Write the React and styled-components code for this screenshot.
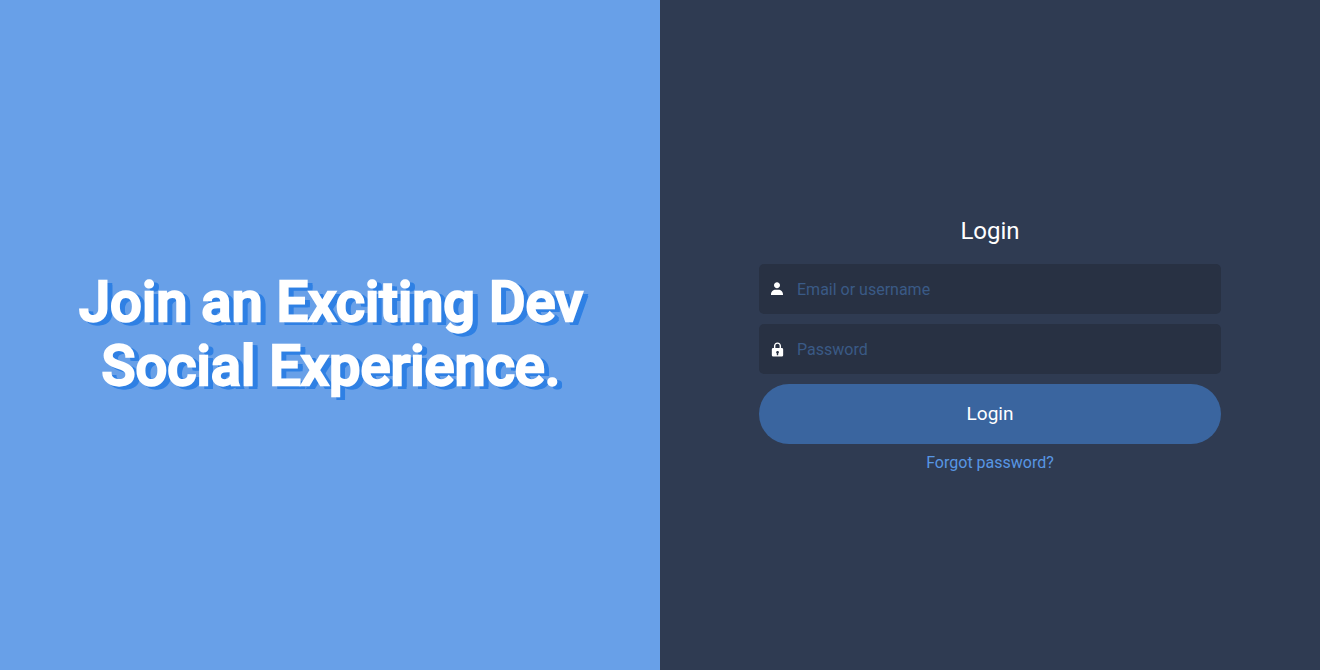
import React from "react";
import styled, { createGlobalStyle } from "styled-components";
import { BiSolidUser, BiSolidLock } from "react-icons/bi";

const Global = createGlobalStyle`
  * { box-sizing: border-box; }
  body { margin: 0; font-family: Roboto, sans-serif; color: #fff; }
`;
const Page = styled.main`
  display: grid;
  grid-template-columns: 1fr 1fr;
  height: 100vh;
`;
const Hero = styled.section`
  display: flex;
  align-items: center;
  justify-content: center;
  padding: 0 66px;
  background: #68a0e8;
`;
const Headline = styled.h1`
  margin: 0;
  padding: 0 0 2px 2px;
  font-size: 56px;
  line-height: 64px;
  font-weight: 500;
  text-align: center;
  -webkit-text-stroke: 2.3px #fff;
  text-shadow:
    4px 2px 0 #2f80e4,
    6px 2px 0 #2f80e4,
    4px 4px 0 #2f80e4,
    6px 4px 0 #2f80e4;
`;
const Panel = styled.section`
  display: flex;
  align-items: center;
  justify-content: center;
  background: #2f3b52;
`;
const Form = styled.form`
  width: 70%;
  display: flex;
  flex-direction: column;
  gap: 10px;
  padding-top: 19px;
`;
const Title = styled.h2`
  margin: 0 0 9px;
  font-size: 24px;
  line-height: 28px;
  font-weight: 400;
  text-align: center;
`;
const Field = styled.label`
  display: flex;
  align-items: center;
  height: 50px;
  padding: 0 10px;
  border-radius: 5px;
  background: #283143;
`;
const UserIcon = styled(BiSolidUser)`
  flex: none;
  width: 16px;
  height: 16px;
`;
const LockIcon = styled(BiSolidLock)`
  flex: none;
  width: 17px;
  height: 17px;
  margin-right: -1px;
`;
const Input = styled.input`
  flex: 1;
  min-width: 0;
  margin-left: 12px;
  padding: 0;
  border: 0;
  outline: 0;
  background: none;
  color: #fff;
  font: 16px Roboto, sans-serif;
  &::placeholder { color: #3a5a86; opacity: 1; }
`;
const Button = styled.button`
  height: 60px;
  padding: 0 0 2px;
  border: 0;
  border-radius: 30px;
  background: #3a659f;
  color: #fff;
  font: 19px Roboto, sans-serif;
`;
const Link = styled.a`
  margin-top: -1px;
  font-size: 16px;
  line-height: 19px;
  text-align: center;
  color: #5896e4;
`;

export default function App() {
  return (
    <Page>
      <Global />
      <Hero><Headline>Join an Exciting Dev Social Experience.</Headline></Hero>
      <Panel>
        <Form>
          <Title>Login</Title>
          <Field>
            <UserIcon />
            <Input placeholder="Email or username" />
          </Field>
          <Field>
            <LockIcon />
            <Input type="password" placeholder="Password" />
          </Field>
          <Button type="button">Login</Button>
          <Link>Forgot password?</Link>
        </Form>
      </Panel>
    </Page>
  );
}
